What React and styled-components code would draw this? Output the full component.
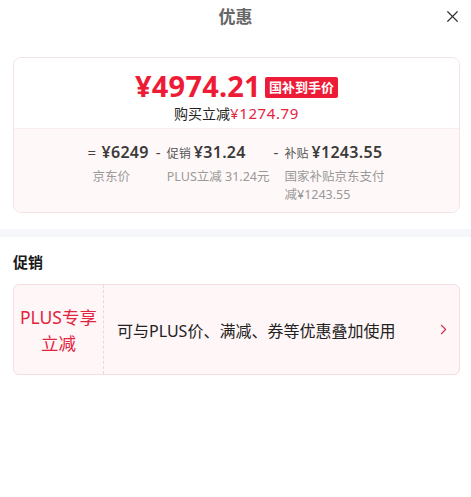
import React from "react";
import styled, { createGlobalStyle } from "styled-components";
import { X, ChevronRight } from "lucide-react";

const GlobalStyle = createGlobalStyle`
  body {
    margin: 0;
    background: #fff;
    font-family: "Noto Sans", "Noto Sans CJK SC", sans-serif;
    color: #222;
  }
`;

const Page = styled.div`
  width: 471px;
  min-height: 497px;
  background: #fff;
`;

const Header = styled.div`
  position: relative;
  height: 34px;
  display: flex;
  align-items: center;
  justify-content: center;
  margin-bottom: 23px;
`;

const Title = styled.h1`
  margin: 0;
  font-size: 17px;
  font-weight: 700;
  color: #666;
  line-height: 34px;
  margin-top: -1px;
`;

const Close = styled.button`
  position: absolute;
  right: 9px;
  top: 7px;
  border: 0;
  background: none;
  padding: 0;
  color: #333;
  display: flex;
`;

const Card = styled.div`
  margin: 0 11px 0 13px;
  border: 1px solid #f3e3e6;
  border-radius: 8px;
  overflow: hidden;
`;

const Top = styled.div`
  display: flex;
  flex-direction: column;
  align-items: center;
  padding: 12px 0 8px;
  height: 50px;
  background: #fff;
`;

const PriceLine = styled.div`
  display: flex;
  align-items: center;
  gap: 4px;
  height: 32px;
`;

const BigPrice = styled.span`
  font-size: 29px;
  line-height: 32px;
  font-weight: 700;
  color: #ee1b36;
  letter-spacing: 0.2px;
`;

const Badge = styled.span`
  background: #ee1b36;
  color: #fff;
  font-size: 13px;
  font-weight: 700;
  padding: 0 4px;
  height: 21px;
  line-height: 21px;
  border-radius: 2px;
  margin-top: 3px;
`;

const Saving = styled.div`
  font-size: 14px;
  color: #222;
  line-height: 18px;
  margin-top: 2px;
`;

const Amount = styled.span`
  color: #e3243f;
  font-size: 15px;
  letter-spacing: 0.6px;
`;

const Bottom = styled.div`
  background: #fff8f8;
  border-top: 1px solid #fbeeee;
  display: flex;
  justify-content: center;
  gap: 4px;
  padding: 12px 0 8px;
`;

const Col = styled.div`
  display: flex;
  flex-direction: column;
  padding-right: ${(p) => p.$pad || 0}px;
`;

const Row = styled.div`
  display: flex;
  align-items: baseline;
  height: 22px;
`;

const Sign = styled.span`
  font-size: 15px;
  color: #444;
  width: ${(p) => p.$w || 11}px;
`;

const Tag = styled.span`
  font-size: 12px;
  color: #555;
  margin-right: 3px;
`;

const Value = styled.span`
  font-size: 16px;
  font-weight: 600;
  color: #3a3a3a;
  letter-spacing: 0.3px;
`;

const Label = styled.div`
  font-size: 12.5px;
  color: #999;
  line-height: 18px;
  margin-top: 5px;
  padding-left: ${(p) => p.$indent}px;
  max-width: ${(p) => p.$max || "none"};
`;

const Band = styled.div`
  height: 8px;
  background: #f6f7fb;
  margin-top: 16px;
`;

const Heading = styled.h2`
  margin: 0;
  padding: 14px 13px 0;
  font-size: 15px;
  font-weight: 700;
  color: #1a1a1a;
  line-height: 22px;
`;

const PromoCard = styled.div`
  margin: 11px 11px 0 13px;
  height: 89px;
  border: 1px solid #f5dde1;
  border-radius: 6px;
  background: #fff6f7;
  display: flex;
  align-items: center;
`;

const PromoTag = styled.div`
  width: 89px;
  height: 100%;
  border-right: 1px dashed #eed6da;
  display: flex;
  align-items: center;
  justify-content: center;
  text-align: center;
  font-size: 17.5px;
  line-height: 26px;
  color: #e3243f;
`;

const PromoText = styled.div`
  flex: 1;
  padding-left: 13px;
  font-size: 16px;
  color: #222;
`;

const Arrow = styled.div`
  display: flex;
  color: #c9344e;
  margin-right: 7px;
`;

export default function App() {
  return (
    <Page>
      <GlobalStyle />
      <Header>
        <Title>优惠</Title>
        <Close>
          <X size={19} strokeWidth={1.5} />
        </Close>
      </Header>

      <Card>
        <Top>
          <PriceLine>
            <BigPrice>¥4974.21</BigPrice>
            <Badge>国补到手价</Badge>
          </PriceLine>
          <Saving>
            购买立减<Amount>¥1274.79</Amount>
          </Saving>
        </Top>
        <Bottom>
          <Col $pad={3}>
            <Row>
              <Sign $w={14}>=</Sign>
              <Value>¥6249</Value>
            </Row>
            <Label $indent={5}>京东价</Label>
          </Col>
          <Col>
            <Row>
              <Sign>-</Sign>
              <Tag>促销</Tag>
              <Value>¥31.24</Value>
            </Row>
            <Label $indent={11}>PLUS立减 31.24元</Label>
          </Col>
          <Col>
            <Row>
              <Sign>-</Sign>
              <Tag>补贴</Tag>
              <Value>¥1243.55</Value>
            </Row>
            <Label $indent={11} $max="101px">
              国家补贴京东支付减¥1243.55
            </Label>
          </Col>
        </Bottom>
      </Card>

      <Band />

      <Heading>促销</Heading>
      <PromoCard>
        <PromoTag>
          PLUS专享
          <br />
          立减
        </PromoTag>
        <PromoText>可与PLUS价、满减、券等优惠叠加使用</PromoText>
        <Arrow>
          <ChevronRight size={17} strokeWidth={1.6} />
        </Arrow>
      </PromoCard>
    </Page>
  );
}
